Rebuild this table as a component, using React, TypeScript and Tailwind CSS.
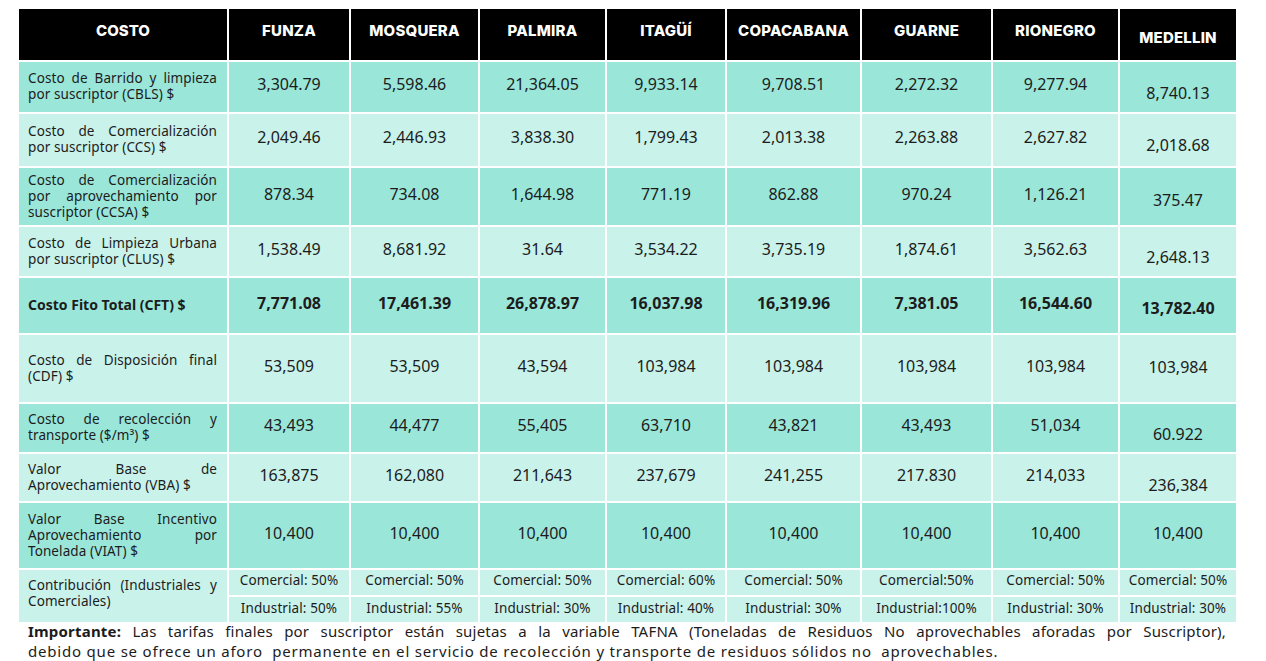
import React from "react";

const cities = ["FUNZA", "MOSQUERA", "PALMIRA", "ITAGÜÍ", "COPACABANA", "GUARNE", "RIONEGRO", "MEDELLIN"];

type Row = {
  lines: string[];
  values: string[];
  dark: boolean;
  bold?: boolean;
  med: string; // padding for the Medellin cell, which sits lower in the source
};

const rows: Row[] = [
  { lines: ["Costo de Barrido y limpieza", "por suscriptor (CBLS) $"], values: ["3,304.79", "5,598.46", "21,364.05", "9,933.14", "9,708.51", "2,272.32", "9,277.94", "8,740.13"], dark: true, med: "pt-[12px]" },
  { lines: ["Costo de Comercialización", "por suscriptor (CCS) $"], values: ["2,049.46", "2,446.93", "3,838.30", "1,799.43", "2,013.38", "2,263.88", "2,627.82", "2,018.68"], dark: false, med: "pt-[10px]" },
  { lines: ["Costo de Comercialización", "por aprovechamiento por", "suscriptor (CCSA) $"], values: ["878.34", "734.08", "1,644.98", "771.19", "862.88", "970.24", "1,126.21", "375.47"], dark: true, med: "pt-[6px]" },
  { lines: ["Costo de Limpieza Urbana", "por suscriptor (CLUS) $"], values: ["1,538.49", "8,681.92", "31.64", "3,534.22", "3,735.19", "1,874.61", "3,562.63", "2,648.13"], dark: false, med: "pt-[11px]" },
  { lines: ["Costo Fito Total (CFT) $"], values: ["7,771.08", "17,461.39", "26,878.97", "16,037.98", "16,319.96", "7,381.05", "16,544.60", "13,782.40"], dark: true, bold: true, med: "pt-[4px]" },
  { lines: ["Costo de Disposición final", "(CDF) $"], values: ["53,509", "53,509", "43,594", "103,984", "103,984", "103,984", "103,984", "103,984"], dark: false, med: "pb-[4px]" },
  { lines: ["Costo de recolección y", "transporte ($/m³) $"], values: ["43,493", "44,477", "55,405", "63,710", "43,821", "43,493", "51,034", "60.922"], dark: true, med: "pt-[12px]" },
  { lines: ["Valor Base de", "Aprovechamiento (VBA) $"], values: ["163,875", "162,080", "211,643", "237,679", "241,255", "217.830", "214,033", "236,384"], dark: false, med: "pt-[14px]" },
  { lines: ["Valor Base Incentivo", "Aprovechamiento por", "Tonelada (VIAT) $"], values: ["10,400", "10,400", "10,400", "10,400", "10,400", "10,400", "10,400", "10,400"], dark: true, med: "pb-[5px]" },
];

const comercial = ["Comercial: 50%", "Comercial: 50%", "Comercial: 50%", "Comercial: 60%", "Comercial: 50%", "Comercial:50%", "Comercial: 50%", "Comercial: 50%"];
const industrial = ["Industrial: 50%", "Industrial: 55%", "Industrial: 30%", "Industrial: 40%", "Industrial: 30%", "Industrial:100%", "Industrial: 30%", "Industrial: 30%"];

const txt = "font-['Noto_Sans',sans-serif] text-[#1c1c1c]";

// justified lines, last one left aligned (like a Word table cell)
function Label({ lines, bold }: { lines: string[]; bold?: boolean }) {
  return (
    <div className={`${txt} w-full leading-[16px] ${bold ? "text-[14px] font-bold" : "text-[13.5px] tracking-[0.1px]"}`}>
      {lines.map((l, i) => (
        <div key={i} className={i < lines.length - 1 ? "text-justify [text-align-last:justify]" : "text-left"}>
          {l}
        </div>
      ))}
    </div>
  );
}

export default function App() {
  return (
    <div className="min-h-screen bg-white pt-[9px]">
      <div className="ml-[19px] grid w-[1217px] grid-cols-[208px_120px_127px_125px_118px_133px_129px_125px_116px] grid-rows-[51px_50px_52px_57px_49px_55px_67px_48px_47px_65px_25px_25px] gap-[2px] bg-white">
        {/* header */}
        <div className="flex items-center justify-center bg-black pb-[6px] font-['Inter',sans-serif] text-[15px] font-extrabold text-white">
          COSTO
        </div>
        {cities.map((c) => (
          <div
            key={c}
            className={`flex items-center justify-center bg-black font-['Inter',sans-serif] text-[15px] font-extrabold tracking-[0.2px] text-white ${
              c === "MEDELLIN" ? "pt-[8px]" : "pb-[6px]"
            }`}
          >
            {c}
          </div>
        ))}

        {rows.map((r) => {
          const bg = r.dark ? "bg-[#9ae6d9]" : "bg-[#c9f2eb]";
          return (
            <React.Fragment key={r.lines[0] + r.lines.length}>
              <div className={`flex items-center pl-[9px] pr-[10px] pb-[2px] ${bg}`}>
                <Label lines={r.lines} bold={r.bold} />
              </div>
              {r.values.map((v, i) => (
                <div
                  key={i}
                  className={`flex items-center justify-center ${bg} ${txt} text-[16px] ${r.bold ? "font-bold" : ""} ${
                    i === 7 ? r.med : "pb-[6px]"
                  }`}
                >
                  {v}
                </div>
              ))}
            </React.Fragment>
          );
        })}

        {/* contribución */}
        <div className="row-span-2 flex items-center bg-[#c9f2eb] pl-[9px] pr-[10px] pb-[6px]">
          <Label lines={["Contribución (Industriales y", "Comerciales)"]} />
        </div>
        {comercial.map((v, i) => (
          <div key={"c" + i} className={`flex items-center justify-center bg-[#c9f2eb] pb-[4px] ${txt} text-[13.5px] tracking-[0.1px]`}>
            {v}
          </div>
        ))}
        {industrial.map((v, i) => (
          <div key={"i" + i} className={`flex items-center justify-center bg-[#c9f2eb] pb-[2px] ${txt} text-[13.5px] tracking-[0.1px]`}>
            {v}
          </div>
        ))}
      </div>

      <div className={`ml-[28px] mt-[-1px] w-[1198px] ${txt} text-[15px] leading-[20px]`}>
        <div className="text-justify tracking-[0.2px] [text-align-last:justify]">
          <span className="font-bold">Importante:</span> Las tarifas finales por suscriptor están sujetas a la variable TAFNA (Toneladas de Residuos No aprovechables aforadas por Suscriptor),
        </div>
        <div className="tracking-[0.8px]">
          debido que se ofrece un aforo&nbsp; permanente en el servicio de recolección y transporte de residuos sólidos no&nbsp; aprovechables.
        </div>
      </div>
    </div>
  );
}
